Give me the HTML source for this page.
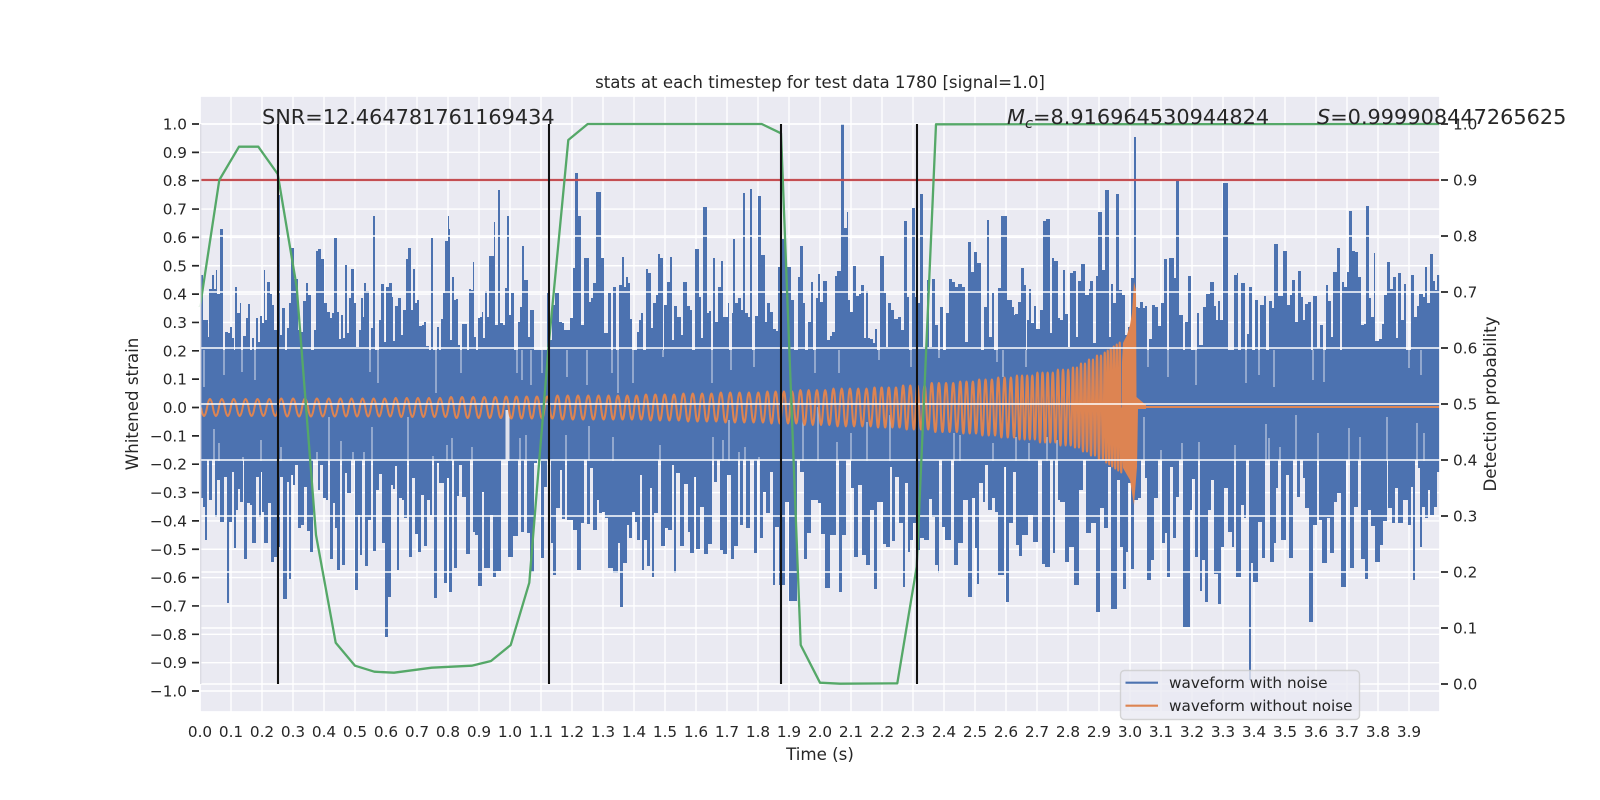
<!DOCTYPE html>
<html><head><meta charset="utf-8"><title>stats</title>
<style>html,body{margin:0;padding:0;background:#fff}svg{display:block}text{font-family:"DejaVu Sans","Liberation Sans",sans-serif;fill:#262626}</style>
</head><body>
<svg xmlns="http://www.w3.org/2000/svg" width="1600" height="800" viewBox="0 0 1600 800">
<rect width="1600" height="800" fill="#fff"/>
<rect x="200" y="96" width="1240" height="616" fill="#eaeaf2"/>
<path stroke="#fff" stroke-width="1.39" fill="none" d="M231 96V712M262 96V712M293 96V712M324 96V712M355 96V712M386 96V712M417 96V712M448 96V712M479 96V712M510 96V712M541 96V712M572 96V712M603 96V712M634 96V712M665 96V712M696 96V712M727 96V712M758 96V712M789 96V712M820 96V712M851 96V712M882 96V712M913 96V712M944 96V712M975 96V712M1006 96V712M1037 96V712M1068 96V712M1099 96V712M1130 96V712M1161 96V712M1192 96V712M1223 96V712M1254 96V712M1285 96V712M1316 96V712M1347 96V712M1378 96V712M1409 96V712M200 124H1440M200 152.35H1440M200 180.7H1440M200 209.05H1440M200 237.4H1440M200 265.75H1440M200 294.1H1440M200 322.45H1440M200 350.8H1440M200 379.15H1440M200 407.5H1440M200 435.85H1440M200 464.2H1440M200 492.55H1440M200 520.9H1440M200 549.25H1440M200 577.6H1440M200 605.95H1440M200 634.3H1440M200 662.65H1440M200 691H1440"/>
<!-- blue, top -->
<path fill="#4c72b0" d="M200 405V275H203V320H208V337H209V289H212V275H214V289H216V270H217V294H220V229H223V375H225V332H228V333H230V327H232V338H234V367H235V287H237V313H240V303H241V372H243V336H246V318H248V304H250V353H252V338H254V380H256V318H258V342H260V316H262V323H264V270H265V320H267V282H270V294H272V305H274V330H277V195H280V335H282V308H285V357H287V328H289V303H291V248H294V279H298V330H300V332H303V301H306V283H308V295H311V350H314V330H316V251H318V249H321V259H324V303H327V312H330V318H332V313H334V238H337V312H339V339H341V315H343V338H345V265H347V333H349V298H351V269H354V303H356V347H359V330H361V298H363V317H364V283H366V291H369V372H371V328H373V216H375V360H377V383H379V320H381V284H384V342H386V287H389V283H392V297H393V341H395V306H398V298H401V335H403V310H406V259H408V248H411V310H413V269H415V303H417V300H419V326H422V325H424V322H426V346H429V358H431V238H433V356H435V393H437V327H439V363H441V319H443V293H445V241H448V216H449V229H450V340H452V277H454V300H456V299H458V345H460V373H462V324H464V324H467V361H469V289H471V290H473V262H474V337H476V353H478V318H480V317H482V312H483V338H485V291H487V317H489V256H492V256H494V222H495V325H498V190H500V323H503V325H505V288H507V216H509V315H511V293H514V355H516V373H518V322H520V307H522V246H524V280H528V337H530V310H534V393H538V373H546V370H547V293H549V340H552V305H555V293H559V322H562V323H564V330H570V318H573V268H575V173H578V216H581V325H584V258H589V302H591V298H593V283H596V192H601V258H604V333H608V293H611V373H613V287H616V393H619V285H622V257H624V287H626V277H628V283H630V319H632V383H634V353H637V332H639V320H641V313H643V350H646V269H648V273H651V328H653V303H656V295H658V254H660V258H663V357H664V305H667V282H670V257H672V340H674V306H677V317H681V335H683V282H687V306H690V310H692V350H695V249H699V297H701V338H703V207H707V313H709V311H711V383H713V258H715V322H718V287H721V261H723V317H725V317H728V303H729V370H732V313H733V239H735V303H738V298H741V310H743V193H745V313H748V317H750V189H752V367H755V316H758V196H761V255H765V322H767V303H770V312H773V329H776V331H778V267H780V239H785V267H791V300H794V353H798V277H800V246H803V303H805V357H808V322H811V282H813V363H816V298H818V274H820V302H823V281H827V340H830V336H832V332H835V276H837V271H841V124H844V228H847V212H848V300H850V312H853V266H856V296H859V294H861V285H864V338H866V291H868V338H870V339H873V343H875V329H877V360H880V256H884V293H886V347H888V303H891V310H894V319H898V317H901V330H904V221H907V297H909V367H912V208H915V297H918V303H920V194H923V347H927V280H929V347H932V279H935V325H938V358H940V307H943V350H946V313H949V279H952V282H955V287H958V284H962V287H965V342H968V242H971V272H974V252H977V263H981V352H984V307H987V220H989V337H992V293H994V362H998V288H1001V216H1007V300H1012V307H1014V315H1015V314H1018V302H1021V268H1024V285H1026V367H1027V320H1029V289H1031V323H1034V306H1036V329H1040V310H1043V221H1046V219H1050V333H1052V258H1054V261H1058V318H1060V320H1063V270H1065V314H1068V347H1070V273H1073V271H1076V337H1078V281H1081V264H1085V295H1089V289H1090V281H1093V343H1096V276H1098V212H1102V270H1105V190H1109V337H1111V284H1113V303H1116V194H1119V290H1122V295H1125V335H1128V327H1131V278H1134V137H1136V307H1138V308H1140V302H1143V308H1145V306H1147V367H1149V339H1152V305H1155V307H1158V326H1161V303H1164V259H1167V377H1169V258H1174V278H1176V181H1179V315H1183V353H1185V322H1188V276H1191V350H1194V385H1197V313H1199V345H1203V307H1206V294H1210V282H1214V306H1216V320H1218V301H1220V320H1223V183H1228V356H1231V363H1234V275H1237V273H1238V352H1241V283H1245V383H1247V334H1249V287H1252V357H1255V300H1258V375H1260V305H1264V296H1266V368H1269V301H1272V308H1274V244H1278V296H1283V251H1287V305H1290V295H1292V280H1295V322H1298V271H1301V297H1303V320H1305V304H1308V302H1311V353H1313V296H1317V348H1320V325H1323V360H1326V285H1328V301H1331V337H1333V272H1337V248H1340V353H1342V282H1344V287H1347V272H1349V211H1352V251H1355V252H1358V277H1361V325H1364V324H1366V206H1369V298H1371V317H1374V253H1375V341H1379V339H1382V324H1384V295H1387V262H1390V289H1393V277H1396V338H1398V273H1401V320H1404V284H1406V355H1409V363H1411V275H1414V317H1417V306H1419V294H1423V297H1425V267H1427V303H1430V254H1433V281H1435V290H1437V275H1440V405Z"/>
<!-- blue, bottom -->
<path fill="#4c72b0" d="M200 404V498H203V507H205V540H207V455H209V500H212V429H215V517H217V480H220V522H224V477H227V603H229V522H232V472H234V548H236V510H238V489H240V502H243V457H244V559H247V503H250V505H252V543H256V477H259V517H261V472H262V512H264V543H268V503H271V562H274V557H277V547H280V477H283V599H287V482H289V579H291V475H293V485H295V465H298V528H301V525H304V487H307V531H310V552H313V452H318V490H320V465H323V498H326V500H328V417H330V559H333V503H335V528H337V570H340V441H342V565H345V473H347V493H351V452H354V458H355V590H358V515H360V555H362V452H365V566H368V520H371V427H373V551H376V490H379V474H382V543H385V637H388V597H391V485H393V489H395V466H397V570H399V498H402V500H404V518H407V417H409V557H412V478H415V534H418V552H421V495H424V546H427V500H430V515H432V456H434V598H437V463H439V483H444V583H447V478H449V592H452V458H454V568H457V496H459V465H462V497H466V554H470V447H473V532H475V535H478V586H482V492H484V568H490V515H493V577H496V571H501V407H508V557H513V536H518V438H521V532H524V435H527V533H530V572H534V463H537V435H541V558H544V487H547V459H551V543H553V575H556V508H560V470H562V519H565V435H567V520H573V530H577V570H581V523H584V452H587V524H590V468H593V530H597V500H599V513H602V512H605V518H608V568H613V573H618V543H620V607H623V563H627V525H629V538H632V512H635V522H637V540H640V475H642V570H644V540H647V566H650V488H652V577H654V513H658V445H661V546H665V528H668V530H672V465H674V573H676V473H680V546H684V484H688V532H690V553H694V477H696V549H700V507H704V554H708V544H712V437H714V482H717V438H720V550H723V554H727V475H731V559H734V546H738V452H740V525H743V457H746V528H750V452H754V553H757V457H760V538H763V492H766V513H770V472H773V585H775V527H779V585H785V502H789V601H797V415H800V472H804V559H807V533H811V500H818V503H821V534H825V588H830V535H836V442H839V592H842V535H846V460H851V488H854V557H858V485H862V555H866V565H870V510H874V589H877V502H883V544H886V547H890V467H892V541H895V477H899V523H903V587H905V483H908V552H910V540H913V523H916V550H920V538H924V540H929V499H932V517H935V565H938V573H939V460H942V527H945V540H951V433H954V565H958V543H963V500H968V597H972V498H975V548H977V584H979V483H983V502H985V465H988V510H992V498H995V512H998V575H1004V467H1006V602H1009V523H1013V472H1016V545H1019V556H1022V535H1028V515H1033V542H1038V458H1042V564H1045V567H1050V448H1053V553H1055V452H1058V500H1060V502H1065V562H1069V547H1074V585H1079V490H1083V453H1086V533H1091V523H1096V612H1100V508H1104V528H1108V467H1111V609H1117V480H1120V547H1123V589H1126V552H1128V483H1131V569H1134V500H1138V498H1141V417H1145V478H1147V580H1151V560H1154V498H1158V450H1162V543H1165V533H1167V577H1170V467H1173V538H1176V497H1179V443H1183V627H1190V510H1192V479H1195V557H1198V442H1200V591H1202V560H1205V602H1208V510H1211V480H1214V574H1218V604H1221V547H1224V488H1228V532H1232V547H1234V445H1236V577H1241V505H1244V518H1246V452H1249V680H1251V563H1253V582H1258V522H1262V558H1265V424H1267V438H1270V562H1274V543H1276V488H1278V447H1281V540H1286V475H1289V558H1293V415H1297V497H1300V455H1303V478H1305V508H1309V622H1313V525H1317V433H1319V520H1322V563H1327V518H1330V553H1334V502H1337V493H1341V587H1346V428H1350V568H1354V507H1358V437H1361V559H1365V579H1368V510H1371V526H1375V562H1380V545H1383V521H1387V417H1388V508H1392V523H1395V488H1398V523H1403V500H1408V525H1411V487H1413V580H1415V423H1418V468H1420V547H1422V507H1425V518H1428V490H1430V515H1434V507H1437V472H1440V404Z"/>
<!-- solid noise body -->
<rect x="200" y="350" width="1240" height="110" fill="#4c72b0"/>
<!-- thin slits through the body -->
<path fill="none" stroke="#eaeaf2" stroke-opacity=".75" stroke-width="1.2" d="M204 350V387M224 350V375M242 350V372M255 350V380M370 350V372M378 350V383M436 350V393M461 350V373M517 350V373M522 350V380M531 350V385M542 350V373M567 350V377M587 350V385M612 350V373M618 350V393M633 350V383M663 350V357M712 350V383M731 350V370M754 350V367M815 350V373M839 350V373M879 350V360M911 350V367M939 350V358M997 350V362M1003 350V377M1026 350V367M1148 350V367M1168 350V377M1196 350V385M1246 350V383M1259 350V375M1274 350V387M1313 350V380M1324 350V382M1409 350V368M1421 350V375M214 429V461M219 443V461M243 457V461M261 440V461M281 447V461M317 452V461M329 417V461M341 441V461M353 452V461M364 452V461M372 427V461M408 417V461M433 456V461M447 445V461M452 438V461M472 447V461M520 438V461M526 435V461M566 435V461M589 426V461M613 437V461M660 445V461M713 437V461M723 440V461M729 420V461M739 452V461M745 447V461M759 457V461M803 415V461M818 407V461M837 442V461M851 433V461M867 422V461M890 415V461M954 433V461M960 435V461M993 443V461M1016 437V461M1029 443V461M1047 437V461M1057 440V461M1144 417V461M1161 450V461M1182 443V461M1199 442V461M1235 445V461M1266 424V461M1269 438V461M1280 447V461M1296 415V461M1318 433V461M1349 428V461M1360 437V461M1387 417V461M1417 423V461M1424 433V461"/>
<path fill="none" stroke="#dfe2ec" stroke-width="4" d="M507.5 410V461"/>
<!-- orange -->
<path fill="none" stroke="#dd8452" stroke-width="2.08" stroke-linejoin="round" d="M201 407.5q3 17 6 0
2.97-17 5.94 0 2.97 17 5.94 0 2.97-17 5.94 0 2.97 17 5.94 0 2.97-17 5.94 0 2.97 17 5.94 0 2.97-17 5.94 0 2.97 17 5.94 0 2.97-17 5.94 0 2.97 17 5.94 0 2.97-17 5.94 0 2.97 17 5.94 0 2.97-18 5.94 0 2.97 18 5.94 0 2.97-18 5.94 0 2.97 18 5.94 0 2.97-18 5.94 0 2.97 18 5.94 0 2.97-18 5.94 0 2.97 18 5.94 0 2.97-18 5.94 0 2.97 18 5.94 0
2.77-18 5.53 0 2.77 18 5.53 0 2.77-18 5.53 0 2.77 18 5.53 0 2.77-18 5.53 0 2.77 18 5.53 0 2.77-18 5.53 0 2.77 18 5.53 0 2.77-18 5.53 0 2.77 18 5.53 0 2.77-19 5.53 0 2.77 19 5.53 0 2.77-19 5.53 0 2.77 19 5.53 0 2.77-19 5.53 0 2.77 19 5.53 0 2.77-19 5.53 0 2.77 19 5.53 0 2.77-19 5.53 0 2.77 19 5.53 0 2.77-21 5.53 0 2.77 21 5.53 0 2.77-21 5.53 0 2.77 21 5.53 0 2.77-21 5.53 0 2.77 21 5.53 0 2.77-21 5.53 0 2.77 21 5.53 0 2.77-21 5.53 0 2.77 21 5.53 0
2.57-22 5.13 0 2.57 22 5.13 0 2.57-22 5.13 0 2.57 22 5.13 0 2.57-22 5.13 0 2.57 22 5.13 0 2.57-22 5.13 0 2.57 22 5.13 0 2.57-22 5.13 0 2.57 22 5.13 0 2.57-24 5.13 0 2.57 24 5.13 0 2.57-24 5.13 0 2.57 24 5.13 0 2.57-24 5.13 0 2.57 24 5.13 0 2.57-24 5.13 0 2.57 24 5.13 0 2.57-24 5.13 0 2.57 24 5.13 0
2.34-24 4.68 0 2.34 24 4.68 0 2.34-24 4.68 0 2.34 24 4.68 0 2.34-24 4.68 0 2.34 24 4.68 0 2.34-24 4.68 0 2.34 24 4.68 0 2.34-26 4.68 0 2.34 26 4.68 0 2.34-26 4.68 0 2.34 26 4.68 0 2.34-26 4.68 0 2.34 26 4.68 0 2.34-26 4.68 0 2.34 26 4.68 0 2.34-28 4.68 0 2.34 28 4.68 0 2.34-28 4.68 0 2.34 28 4.68 0 2.34-28 4.68 0 2.34 28 4.68 0 2.34-28 4.68 0 2.34 28 4.68 0 2.34-30 4.68 0 2.34 30 4.68 0 2.34-30 4.68 0 2.34 30 4.68 0 2.34-30 4.68 0 2.34 30 4.68 0 2.34-30 4.68 0 2.34 30 4.68 0 2.34-30 4.68 0 2.34 30 4.68 0
2.07-32 4.13 0 2.07 32 4.13 0 2.07-32 4.13 0 2.07 32 4.13 0 2.07-32 4.13 0 2.07 32 4.13 0 2.07-32 4.13 0 2.07 32 4.13 0 2.07-35 4.13 0 2.07 35 4.13 0 2.07-35 4.13 0 2.07 35 4.13 0 2.07-35 4.13 0 2.07 35 4.13 0 2.07-35 4.13 0 2.07 35 4.13 0 2.07-38 4.13 0 2.07 38 4.13 0 2.07-38 4.13 0 2.07 38 4.13 0 2.07-38 4.13 0 2.07 38 4.13 0 2.07-38 4.13 0 2.07 38 4.13 0 2.07-38 4.13 0 2.07 38 4.13 0
1.79-40 3.58 0 1.79 40 3.58 0 1.79-40 3.58 0 1.79 40 3.58 0 1.79-40 3.58 0 1.79 40 3.58 0 1.79-40 3.58 0 1.79 40 3.58 0 1.79-44 3.58 0 1.79 44 3.58 0 1.79-44 3.58 0 1.79 44 3.58 0 1.79-44 3.58 0 1.79 44 3.58 0 1.79-44 3.58 0 1.79 44 3.58 0 1.79-49 3.58 0 1.79 49 3.58 0 1.79-49 3.58 0 1.79 49 3.58 0 1.79-49 3.58 0 1.79 49 3.58 0 1.79-49 3.58 0 1.79 49 3.58 0
1.58-52 3.17 0 1.58 52 3.17 0 1.58-52 3.17 0 1.58 52 3.17 0 1.58-52 3.17 0 1.58 52 3.17 0 1.58-56 3.17 0 1.58 56 3.17 0 1.58-56 3.17 0 1.58 56 3.17 0 1.58-56 3.17 0 1.58 56 3.17 0 1.58-60 3.17 0 1.58 60 3.17 0 1.58-60 3.17 0 1.58 60 3.17 0 1.58-60 3.17 0 1.58 60 3.17 0
1.28-64 2.56 0 1.28 64 2.56 0 1.28-64 2.56 0 1.28 64 2.56 0 1.28-64 2.56 0 1.28 64 2.56 0 1.28-64 2.56 0 1.28 64 2.56 0 1.28-70 2.56 0 1.28 70 2.56 0 1.28-70 2.56 0 1.28 70 2.56 0 1.28-70 2.56 0 1.28 70 2.56 0 1.28-70 2.56 0 1.28 70 2.56 0 1.28-76 2.56 0 1.28 76 2.56 0 1.28-76 2.56 0 1.28 76 2.56 0 1.28-76 2.56 0 1.28 76 2.56 0
1-80 2 0 1 80 2 0 1-80 2 0 1 80 2 0 1-88 2 0 1 88 2 0 1-88 2 0 1 88 2 0 1-96 2 0 1 96 2 0 1-96 2 0 1 96 2 0 1-104 2 0 1 104 2 0 1-104 2 0 1 104 2 0
.75-110 1.5 0 .75 110 1.5 0 .75-114 1.5 0 .75 114 1.5 0 .75-118 1.5 0 .75 118 1.5 0 .75-122 1.5 0 .75 122 1.5 0 .75-126 1.5 0 .75 126 1.5 0 .75-130 1.5 0 .75 130 1.5 0
M1136 407H1440"/>
<path fill="#dd8452" d="M1122 362L1123 343 1127 335 1130 325 1132 313 1134 282 1136 290 1136.5 397 1146 405V409H1138L1137 467 1134 505 1130 480 1123 468 1122 452Z"/>
<!-- twin grid -->
<path stroke="#fff" stroke-width="1.39" fill="none" d="M200 124H1440M200 180H1440M200 236H1440M200 292H1440M200 348H1440M200 404H1440M200 460H1440M200 516H1440M200 572H1440M200 628H1440M200 684H1440"/>
<path stroke="#c44e52" stroke-width="2.2" fill="none" d="M200 180H1440"/>
<path stroke="#55a868" stroke-width="2.3" fill="none" stroke-linejoin="round" d="M200 307L219.3 180 239 146.7 258.3 146.7 277.7 174 296.7 287 316 535 335.7 642.7 355 665.7 374.3 671.7 394 672.7 431.7 667.7 471.7 665.7 491 661 510.7 645 529.3 582.7 548.7 345 568.3 140 587.7 124 761.7 124 781 133.3 800.7 645 820 682.7 840 683.7 897.3 683.3 916.7 566.7 936 124.3 1440 124"/>
<path stroke="#111" stroke-width="2.08" fill="none" d="M278 124V684M549 124V684M781 124V684M917 124V684"/>
<!-- white spines -->
<rect x="200" y="96" width="1240" height="616" fill="none" stroke="#fff" stroke-width="1.74"/>
<rect x="200" y="124" width="1.4" height="560" fill="#dcdce4"/>
<!-- tick marks -->
<path stroke="#262626" stroke-width="1.7" fill="none" d="M192 124H199M192 152.35H199M192 180.7H199M192 209.05H199M192 237.4H199M192 265.75H199M192 294.1H199M192 322.45H199M192 350.8H199M192 379.15H199M192 407.5H199M192 435.85H199M192 464.2H199M192 492.55H199M192 520.9H199M192 549.25H199M192 577.6H199M192 605.95H199M192 634.3H199M192 662.65H199M192 691H199M1441 124H1448M1441 180H1448M1441 236H1448M1441 292H1448M1441 348H1448M1441 404H1448M1441 460H1448M1441 516H1448M1441 572H1448M1441 628H1448M1441 684H1448"/>
<!-- annotations -->
<text x="262" y="124" font-size="20.83">SNR=12.464781761169434</text>
<text x="1007" y="124" font-size="20.83"><tspan font-style="italic">M</tspan><tspan font-style="italic" font-size="14.6" dy="4">c</tspan><tspan dy="-4">=8.916964530944824</tspan></text>
<text x="1317" y="124" font-size="20.83"><tspan font-style="italic">S</tspan>=0.999908447265625</text>
<text x="820" y="88" font-size="16.62" text-anchor="middle">stats at each timestep for test data 1780 [signal=1.0]</text>
<text x="820" y="760" font-size="16.67" text-anchor="middle">Time (s)</text>
<text transform="translate(138 404) rotate(-90)" font-size="16.67" text-anchor="middle">Whitened strain</text>
<text transform="translate(1496 404) rotate(-90)" font-size="16.67" text-anchor="middle">Detection probability</text>
<g font-size="15.28" text-anchor="end">
<text x="187" y="129.5">1.0</text><text x="187" y="157.9">0.9</text><text x="187" y="186.2">0.8</text><text x="187" y="214.6">0.7</text><text x="187" y="242.9">0.6</text><text x="187" y="271.3">0.5</text><text x="187" y="299.6">0.4</text><text x="187" y="328">0.3</text><text x="187" y="356.3">0.2</text><text x="187" y="384.7">0.1</text><text x="187" y="413">0.0</text><text x="187" y="441.4">−0.1</text><text x="187" y="469.7">−0.2</text><text x="187" y="498.1">−0.3</text><text x="187" y="526.4">−0.4</text><text x="187" y="554.8">−0.5</text><text x="187" y="583.1">−0.6</text><text x="187" y="611.5">−0.7</text><text x="187" y="639.8">−0.8</text><text x="187" y="668.2">−0.9</text><text x="187" y="696.5">−1.0</text>
</g>
<g font-size="15.28">
<text x="1453" y="129.5">1.0</text><text x="1453" y="185.5">0.9</text><text x="1453" y="241.5">0.8</text><text x="1453" y="297.5">0.7</text><text x="1453" y="353.5">0.6</text><text x="1453" y="409.5">0.5</text><text x="1453" y="465.5">0.4</text><text x="1453" y="521.5">0.3</text><text x="1453" y="577.5">0.2</text><text x="1453" y="633.5">0.1</text><text x="1453" y="689.5">0.0</text>
</g>
<g font-size="15.28" text-anchor="middle">
<text x="200" y="737">0.0</text><text x="231" y="737">0.1</text><text x="262" y="737">0.2</text><text x="293" y="737">0.3</text><text x="324" y="737">0.4</text><text x="355" y="737">0.5</text><text x="386" y="737">0.6</text><text x="417" y="737">0.7</text><text x="448" y="737">0.8</text><text x="479" y="737">0.9</text><text x="510" y="737">1.0</text><text x="541" y="737">1.1</text><text x="572" y="737">1.2</text><text x="603" y="737">1.3</text><text x="634" y="737">1.4</text><text x="665" y="737">1.5</text><text x="696" y="737">1.6</text><text x="727" y="737">1.7</text><text x="758" y="737">1.8</text><text x="789" y="737">1.9</text><text x="820" y="737">2.0</text><text x="851" y="737">2.1</text><text x="882" y="737">2.2</text><text x="913" y="737">2.3</text><text x="944" y="737">2.4</text><text x="975" y="737">2.5</text><text x="1006" y="737">2.6</text><text x="1037" y="737">2.7</text><text x="1068" y="737">2.8</text><text x="1099" y="737">2.9</text><text x="1130" y="737">3.0</text><text x="1161" y="737">3.1</text><text x="1192" y="737">3.2</text><text x="1223" y="737">3.3</text><text x="1254" y="737">3.4</text><text x="1285" y="737">3.5</text><text x="1316" y="737">3.6</text><text x="1347" y="737">3.7</text><text x="1378" y="737">3.8</text><text x="1409" y="737">3.9</text>
</g>
<!-- legend -->
<rect x="1120.5" y="670.5" width="239" height="49" rx="4" fill="#eaeaf2" fill-opacity=".8" stroke="#cccccc" stroke-opacity=".8" stroke-width="1.39"/>
<path stroke="#4c72b0" stroke-width="2.08" d="M1125.5 682.7H1158"/>
<path stroke="#dd8452" stroke-width="2.08" d="M1125.5 705.7H1158"/>
<text x="1169" y="688" font-size="15.28">waveform with noise</text>
<text x="1169" y="711" font-size="15.28">waveform without noise</text>
</svg>
</body></html>
